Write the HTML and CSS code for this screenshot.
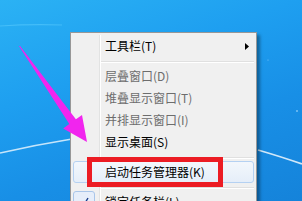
FILE: index.html
```html
<!DOCTYPE html>
<html>
<head>
<meta charset="utf-8">
<link rel="stylesheet" href="styles.css">
</head>
<body>
<div class="desktop">
  <svg class="streaks" width="302" height="201" viewBox="0 0 302 201">
    <path d="M0 26 Q30 24 62 25" stroke="#5fd0ff" stroke-width="1.2" fill="none" opacity="0.5"/>
    <path d="M0 153 Q35 145 72 139" stroke="#ffffff" stroke-width="1.6" fill="none" opacity="0.75"/>
    <path d="M258 150 Q282 157 302 164" stroke="#ffffff" stroke-width="1.8" fill="none" opacity="0.8"/>
    <circle cx="297" cy="111" r="0.8" fill="#bfe6ff"/>
    <circle cx="268" cy="60" r="0.6" fill="#7fc8ff"/>
  </svg>
  <div class="menu">
    <div class="item has-sub"><span>工具栏(T)</span><svg class="sub-arrow" width="4" height="7" viewBox="0 0 4 7"><polygon points="0,0 4,3.5 0,7" fill="#000"/></svg></div>
    <div class="sep"></div>
    <div class="item disabled">层叠窗口(D)</div>
    <div class="item disabled">堆叠显示窗口(T)</div>
    <div class="item disabled">并排显示窗口(I)</div>
    <div class="item">显示桌面(S)</div>
    <div class="sep"></div>
    <div class="item hover">启动任务管理器(K)</div>
    <div class="sep"></div>
    <div class="item checked"><span class="check"><svg width="12" height="12" viewBox="0 0 12 12"><path d="M3 8 L5 10.5 L10 2" stroke="#1c3f8c" stroke-width="1.4" fill="none"/></svg></span>锁定任务栏(L)</div>
    <div class="item">属性(R)</div>
  </div>
  <div class="redbox"></div>
  <svg class="arrow" width="302" height="201" viewBox="0 0 302 201">
    <polygon points="19,46 20,46 75.9,119.3 82,115 87,142 63.2,128.6 69.3,123.9" fill="#f125ee"/>
  </svg>
</div>
</body>
</html>
```
FILE: styles.css
```css
html, body {
  margin: 0;
  padding: 0;
}
body {
  width: 302px;
  height: 201px;
  overflow: hidden;
  font-family: "Noto Sans CJK SC", "Noto Sans", sans-serif;
}
.desktop {
  position: relative;
  width: 302px;
  height: 201px;
  overflow: hidden;
  background: linear-gradient(160deg, #2bb2f4 0%, #1e9ff0 35%, #188fe6 65%, #1583da 100%);
}
.streaks {
  position: absolute;
  left: 0;
  top: 0;
}
.menu {
  position: absolute;
  left: 70px;
  top: 32px;
  width: 181px;
  padding: 2px;
  border: 1px solid #979797;
  background: #f0f0f0;
  box-shadow: 3px 3px 3px rgba(0, 0, 0, 0.35);
}
.menu::before {
  content: "";
  position: absolute;
  left: 28px;
  top: 2px;
  bottom: 2px;
  width: 0;
  border-left: 1px solid #e2e3e3;
  border-right: 1px solid #ffffff;
}
.item {
  position: relative;
  height: 22px;
  line-height: 22px;
  padding-left: 32px;
  padding-right: 5px;
  font-size: 12px;
  color: #000;
  white-space: nowrap;
  display: flex;
  align-items: center;
}
.has-sub {
  justify-content: space-between;
}
.disabled {
  color: #6d6d6d;
}
.hover {
  box-sizing: border-box;
  border: 1px solid #b5d1f2;
  border-radius: 3px;
  background: linear-gradient(#f3f7fc, #e5eef9);
  padding-left: 31px;
}
.sep {
  position: relative;
  height: 8px;
  margin-left: 28px;
}
.sep::after {
  content: "";
  position: absolute;
  left: 0;
  right: 0;
  top: 4px;
  height: 1px;
  border-bottom: 1px solid #ffffff;
  background: #e0e0e0;
}
.checked {
  padding-left: 0;
}
.check {
  box-sizing: border-box;
  width: 22px;
  height: 22px;
  margin-right: 10px;
  border: 1px solid #a9c6ea;
  border-radius: 3px;
  background: #e6eefa;
  display: flex;
  align-items: center;
  justify-content: center;
}
.redbox {
  position: absolute;
  left: 87px;
  top: 157px;
  width: 136px;
  height: 30px;
  box-sizing: border-box;
  border: 5px solid #ec1c24;
}
.arrow {
  position: absolute;
  left: 0;
  top: 0;
}
```
